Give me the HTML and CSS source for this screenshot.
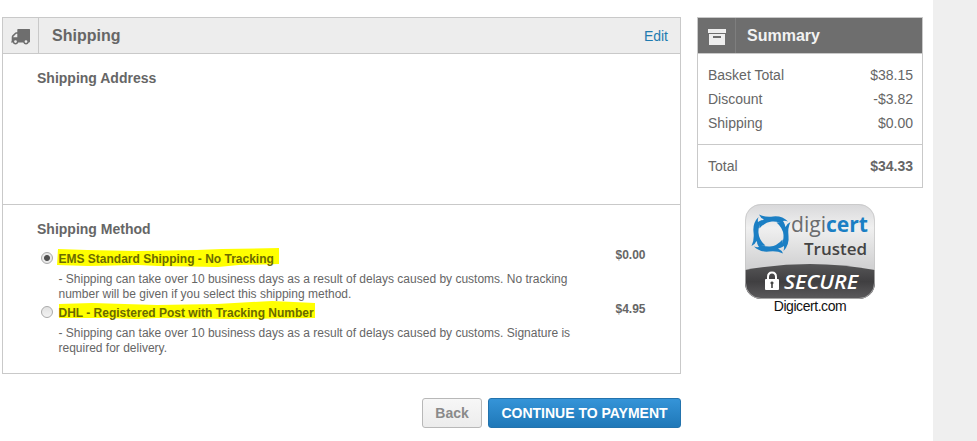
FILE: index.html
```html
<!DOCTYPE html>
<html lang="en">
<head>
<meta charset="utf-8">
<title>Checkout</title>
<link rel="stylesheet" href="styles.css">
</head>
<body>
<div class="page">
  <main class="checkout">
    <section class="panel">
      <header class="panel-head">
        <span class="head-icon">
          <svg width="19" height="17" viewBox="0 0 19 17"><path fill="#6e6e6e" fill-rule="evenodd" d="M7 0h11.500q.5 0 .5.5V12.500q0 1-1 1h-.2a3 3 0 0 1-5.600 0H7.300a3 3 0 0 1-5.600 0H.500Q0 13.500 0 13 .7 12.500.7 11.500V8Q.7 7 1.200 6.500L3.800 3.900Q4.400 3.300 5.200 3.300H6.300V.7Q6.300 0 7 0zM5.200 4.800 2.300 7.700V8.300h4V4.800zM4.500 11.200a1.400 1.400 0 1 0 0 2.800 1.400 1.400 0 0 0 0-2.800zm10.500 0a1.400 1.400 0 1 0 0 2.800 1.400 1.400 0 0 0 0-2.800z"/></svg>
        </span>
        <h2 class="head-title">Shipping</h2>
        <a class="edit" href="#">Edit</a>
      </header>
      <div class="address"><h3>Shipping Address</h3></div>
      <div class="methods">
        <h3>Shipping Method</h3>
        <div class="method">
          <span class="radio radio-on"></span>
          <div class="method-body">
            <div class="method-name">
              <svg class="marker" width="224" height="22" viewBox="0 0 224 22"><path fill="#ff0" d="M1 2 30 3l50 1 60-1 25-1 57-1v16l-40 1-21 2-60-1-20-1-50 1-31-1z"/></svg>
              <span class="name-text">EMS Standard Shipping - No Tracking</span>
            </div>
            <p>- Shipping can take over 10 business days as a result of delays caused by customs. No tracking<br>number will be given if you select this shipping method.</p>
          </div>
          <span class="price">$0.00</span>
        </div>
        <div class="method">
          <span class="radio"></span>
          <div class="method-body">
            <div class="method-name">
              <svg class="marker" width="262" height="22" viewBox="0 0 262 22"><path fill="#ff0" d="M2 3 35 2l65 2 60-1 55-3 43 2v15l-78 1-80-1-20 1-30-1H2z"/></svg>
              <span class="name-text">DHL - Registered Post with Tracking Number</span>
            </div>
            <p>- Shipping can take over 10 business days as a result of delays caused by customs. Signature is<br>required for delivery.</p>
          </div>
          <span class="price">$4.95</span>
        </div>
      </div>
    </section>
    <div class="actions">
      <button class="btn btn-back">Back</button>
      <button class="btn btn-next">CONTINUE TO PAYMENT</button>
    </div>
  </main>
  <aside class="sidebar">
    <section class="panel">
      <header class="panel-head head-dark">
        <span class="head-icon">
          <svg width="18" height="17" viewBox="0 0 18 17"><path fill="#eee" fill-rule="evenodd" d="M0 0h18v4H0zM1 5h16v11H1zM5 7v2h8V7z"/></svg>
        </span>
        <h2 class="head-title">Summary</h2>
      </header>
      <div class="totals">
        <div class="row"><span>Basket Total</span><span>$38.15</span></div>
        <div class="row"><span>Discount</span><span>-$3.82</span></div>
        <div class="row"><span>Shipping</span><span>$0.00</span></div>
      </div>
      <div class="row grand"><span>Total</span><b>$34.33</b></div>
    </section>
    <div class="seal">
      <svg class="badge" width="130" height="95" viewBox="0 0 130 95">
        <defs>
          <linearGradient id="silver" x1="0" y1="0" x2="0" y2="1"><stop offset="0" stop-color="#d8d8da"/><stop offset=".25" stop-color="#f0f0f0"/><stop offset=".65" stop-color="#d2d2d3"/></linearGradient>
          <linearGradient id="dark" x1="0" y1="0" x2="0" y2="1"><stop offset="0" stop-color="#565657"/><stop offset=".5" stop-color="#403f41"/><stop offset="1" stop-color="#5c5b5d"/></linearGradient>
          <clipPath id="shape"><rect width="130" height="95" rx="16"/></clipPath>
          <path id="blade" d="M-12-19.500Q-6-16.500 2-17.500Q11-18.500 17-12.500Q14-13.500 12-13Q13.500-11 14-8.500Q8-13 1-12.500Q-6-12-11.500-5.500Q-12-9-11.500-11.500Q-9.500-14-7-14.500Q-10.500-16-12-19.500z"/>
        </defs>
        <g clip-path="url(#shape)">
          <rect width="130" height="95" fill="url(#silver)"/>
          <path d="M0 66Q65 54 130 66V95H0z" fill="url(#dark)"/>
        </g>
        <rect x=".5" y=".5" width="129" height="94" rx="15.500" fill="none" stroke="#c4c4c4" stroke-opacity=".7"/>
        <g fill="#1b7fc4" transform="translate(26 30)">
          <use href="#blade"/>
          <use href="#blade" transform="rotate(90)"/>
          <use href="#blade" transform="rotate(180)"/>
          <use href="#blade" transform="rotate(270)"/>
        </g>
        <text x="46" y="28" class="logo-text" textLength="77" lengthAdjust="spacingAndGlyphs"><tspan fill="#6b6c6e">digi</tspan><tspan fill="#1b7fc4" font-weight="700">cert</tspan></text>
        <text x="59" y="51" class="trusted-text" textLength="63" lengthAdjust="spacingAndGlyphs">Trusted</text>
        <path d="M23 76v-3q0-4.500 4-4.500t4 4.500v3" fill="none" stroke="#fff" stroke-width="2"/>
        <rect x="20" y="75" width="14" height="11" rx="1" fill="#fff"/>
        <path d="M27 77.500a1.500 1.500 0 0 1 .8 2.800V84h-1.600v-3.700a1.500 1.500 0 0 1 .8-2.800z" fill="#444"/>
        <text x="39" y="85" class="secure-text" textLength="74" lengthAdjust="spacingAndGlyphs">SECURE</text>
      </svg>
      <div class="seal-link">Digicert.com</div>
    </div>
  </aside>
</div>
</body>
</html>
```
FILE: styles.css
```css
* { box-sizing: border-box; }
body {
  margin: 0;
  background: #efefef;
  color: #666;
  font: 14px/24px "Liberation Sans", Arial, sans-serif;
}
.page {
  display: flex;
  gap: 16px;
  align-items: flex-start;
  width: 933px;
  height: 441px;
  padding: 17px 10px 0 2px;
  background: #fff;
}
.checkout { width: 679px; }
.sidebar { width: 226px; }
.panel { border: 1px solid #c9c9c9; }
h2, h3, p { margin: 0; }
.panel-head {
  display: flex;
  align-items: center;
  height: 36px;
  background: #ededed;
  border-bottom: 1px solid #c9c9c9;
}
.head-icon {
  display: flex;
  align-items: center;
  justify-content: center;
  width: 36px;
  height: 35px;
  padding-top: 3px;
  border-right: 1px solid #c9c9c9;
}
.head-title {
  flex: 1;
  padding-left: 13px;
  font-size: 16px;
  line-height: 34px;
}
.edit {
  padding-right: 12px;
  color: #1f7bb0;
  text-decoration: none;
}
.head-dark { background: #6e6e6e; color: #f2f2f2; }
.head-dark .head-icon { width: 38px; border-color: #7e7e7e; }
.head-dark .head-title { padding-left: 11px; }
h3 { font-size: 14px; line-height: 20px; }
.address {
  height: 151px;
  padding: 14px 34px;
  border-bottom: 1px solid #c9c9c9;
}
.methods {
  height: 168px;
  padding: 14px 34px;
}
.method {
  display: flex;
  height: 54px;
  padding: 10px 0 0 4px;
  font-size: 12px;
}
.radio {
  flex: none;
  width: 12px;
  height: 12px;
  margin: 3px 5.5px 0 0;
  border: 1px solid #aaa;
  border-radius: 50%;
  background: linear-gradient(#e2e2e2, #f3f3f3);
}
.radio-on { background: radial-gradient(circle, #505050 0 2.500px, #e9e9e9 3.500px); }
.method-body { width: 557px; }
.method-name {
  position: relative;
  height: 23px;
  line-height: 21px;
  font-weight: 700;
  color: #6b6a00;
}
.marker { position: absolute; left: -2px; top: -2px; }
.name-text { position: relative; }
.method p { line-height: 15px; }
.price { font-weight: 700; line-height: 12px; }
.actions {
  display: flex;
  justify-content: flex-end;
  gap: 6px;
  padding-top: 24px;
}
.btn {
  height: 30px;
  padding: 0;
  border: 1px solid #b8b8b8;
  border-radius: 3px;
  font: 700 14px/28px "Liberation Sans", Arial, sans-serif;
}
.btn-back {
  width: 60px;
  color: #8a8a8a;
  background: linear-gradient(#f7f7f7, #ececec);
}
.btn-next {
  width: 193px;
  color: #fff;
  border-color: #2373ad;
  background: linear-gradient(#3594d8, #1f78b8);
}
.totals {
  height: 91px;
  padding-top: 9px;
  border-bottom: 1px solid #c9c9c9;
}
.row {
  display: flex;
  justify-content: space-between;
  padding: 0 9px 0 10px;
}
.grand { height: 42px; line-height: 42px; }
.seal {
  width: 130px;
  margin: 16px 0 0 48px;
  text-align: center;
}
.badge { display: block; }
.logo-text { font: 21px "Open Sans", sans-serif; }
.trusted-text { font: 600 16px "Open Sans", sans-serif; fill: #444; }
.secure-text { font: italic 600 19px "Open Sans", sans-serif; fill: #fff; }
.seal-link { color: #111; line-height: 14px; letter-spacing: -.45px; }
```
